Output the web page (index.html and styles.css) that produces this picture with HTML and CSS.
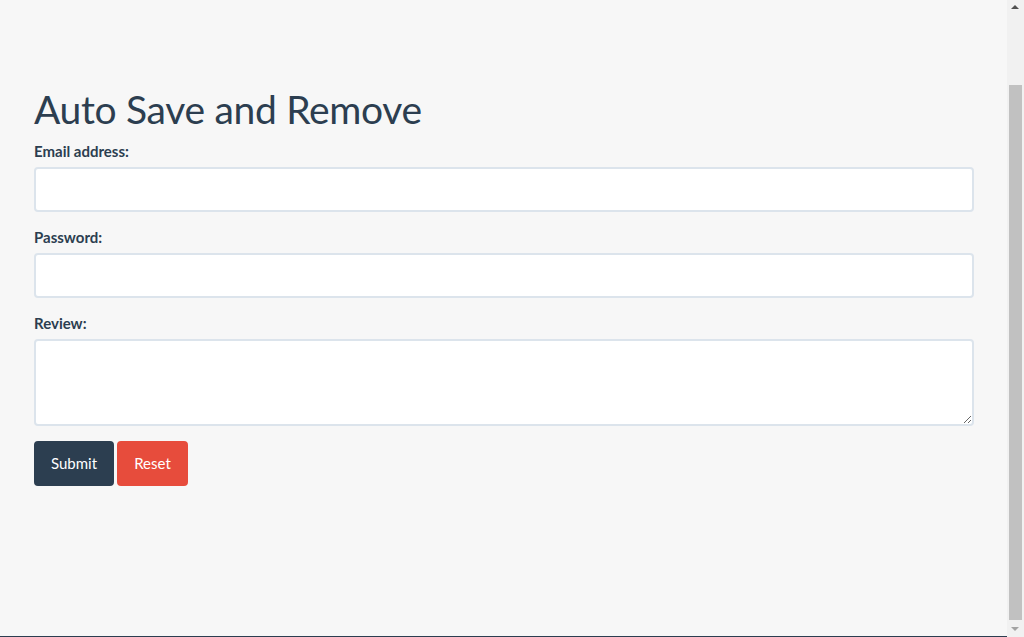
FILE: index.html
```html
<!DOCTYPE html>
<html lang="en">
<head>
<meta charset="utf-8">
<title>Auto Save and Remove</title>
<link rel="stylesheet" href="styles.css">
</head>
<body>
<div class="viewport">
  <main class="container">
    <h1 class="title">Auto Save and Remove</h1>
    <form class="form">
      <div class="form-group">
        <label class="label" for="email">Email address:</label>
        <input class="control" type="email" id="email">
      </div>
      <div class="form-group">
        <label class="label" for="pwd">Password:</label>
        <input class="control" type="password" id="pwd">
      </div>
      <div class="form-group">
        <label class="label" for="review">Review:</label>
        <textarea class="control textarea" id="review" rows="3"></textarea>
      </div>
      <div class="actions">
        <button type="button" class="btn btn-primary">Submit</button>
        <button type="button" class="btn btn-danger">Reset</button>
      </div>
    </form>
  </main>
  <footer class="footer"></footer>
</div>
<div class="scrollbar" aria-hidden="true">
  <div class="sb-arrow sb-up"></div>
  <div class="sb-track"><div class="sb-thumb"></div></div>
  <div class="sb-arrow sb-down"></div>
</div>
</body>
</html>
```
FILE: styles.css
```css
html, body {
  margin: 0;
  padding: 0;
  height: 100%;
  overflow: hidden;
}
body {
  background: #f7f7f7;
  font-family: Lato, "Open Sans", "Liberation Sans", sans-serif;
  font-size: 15px;
  line-height: 1.42857;
  color: #2c3e50;
}
.viewport {
  height: 637px;
  margin-right: 17px;
  display: flex;
  flex-direction: column;
}
.container {
  flex: 1;
  padding: 88px 33px 0 34px;
}
.title {
  margin: 0 0 10px;
  font-size: 39px;
  font-weight: 400;
  line-height: 43px;
  letter-spacing: -0.32px;
}
.form {
  display: flex;
  flex-direction: column;
  gap: 15px;
}
.form-group {
  display: flex;
  flex-direction: column;
}
.label {
  font-weight: 700;
  font-size: 15px;
  line-height: 21px;
  margin-bottom: 5px;
}
.control {
  box-sizing: border-box;
  width: 100%;
  height: 45px;
  margin: 0;
  padding: 10px 15px;
  background: #fff;
  border: 2px solid #dce4ec;
  border-radius: 4px;
  font-family: inherit;
  font-size: 15px;
  color: #2c3e50;
  outline: none;
}
.textarea {
  height: 87px;
  resize: both;
}
.actions {
  display: flex;
  gap: 3px;
}
.btn {
  box-sizing: border-box;
  height: 45px;
  padding: 10px 15px;
  border: 2px solid transparent;
  border-radius: 4px;
  font-family: inherit;
  font-size: 15px;
  line-height: 21px;
  color: #fff;
  cursor: pointer;
}
.btn-primary {
  background: #2c3e50;
  border-color: #2c3e50;
  width: 80px;
}
.btn-danger {
  background: #e74c3c;
  border-color: #e74c3c;
  width: 71px;
}
.footer {
  height: 1px;
  background: #2c3e50;
}
.scrollbar {
  position: absolute;
  top: 0;
  right: 0;
  width: 17px;
  height: 637px;
  background: #f1f1f1;
  display: flex;
  flex-direction: column;
}
.sb-arrow {
  height: 17px;
  position: relative;
}
.sb-up::after, .sb-down::after {
  content: "";
  position: absolute;
  left: 4px;
  border-left: 4px solid transparent;
  border-right: 4px solid transparent;
}
.sb-up::after {
  top: 5px;
  border-bottom: 4px solid #505050;
}
.sb-down::after {
  top: 7px;
  border-top: 4px solid #a3a3a3;
}
.sb-track {
  flex: 1;
  display: flex;
  flex-direction: column;
  justify-content: flex-end;
  padding: 0 2px;
}
.sb-thumb {
  height: 535px;
  background: #c1c1c1;
}
```
